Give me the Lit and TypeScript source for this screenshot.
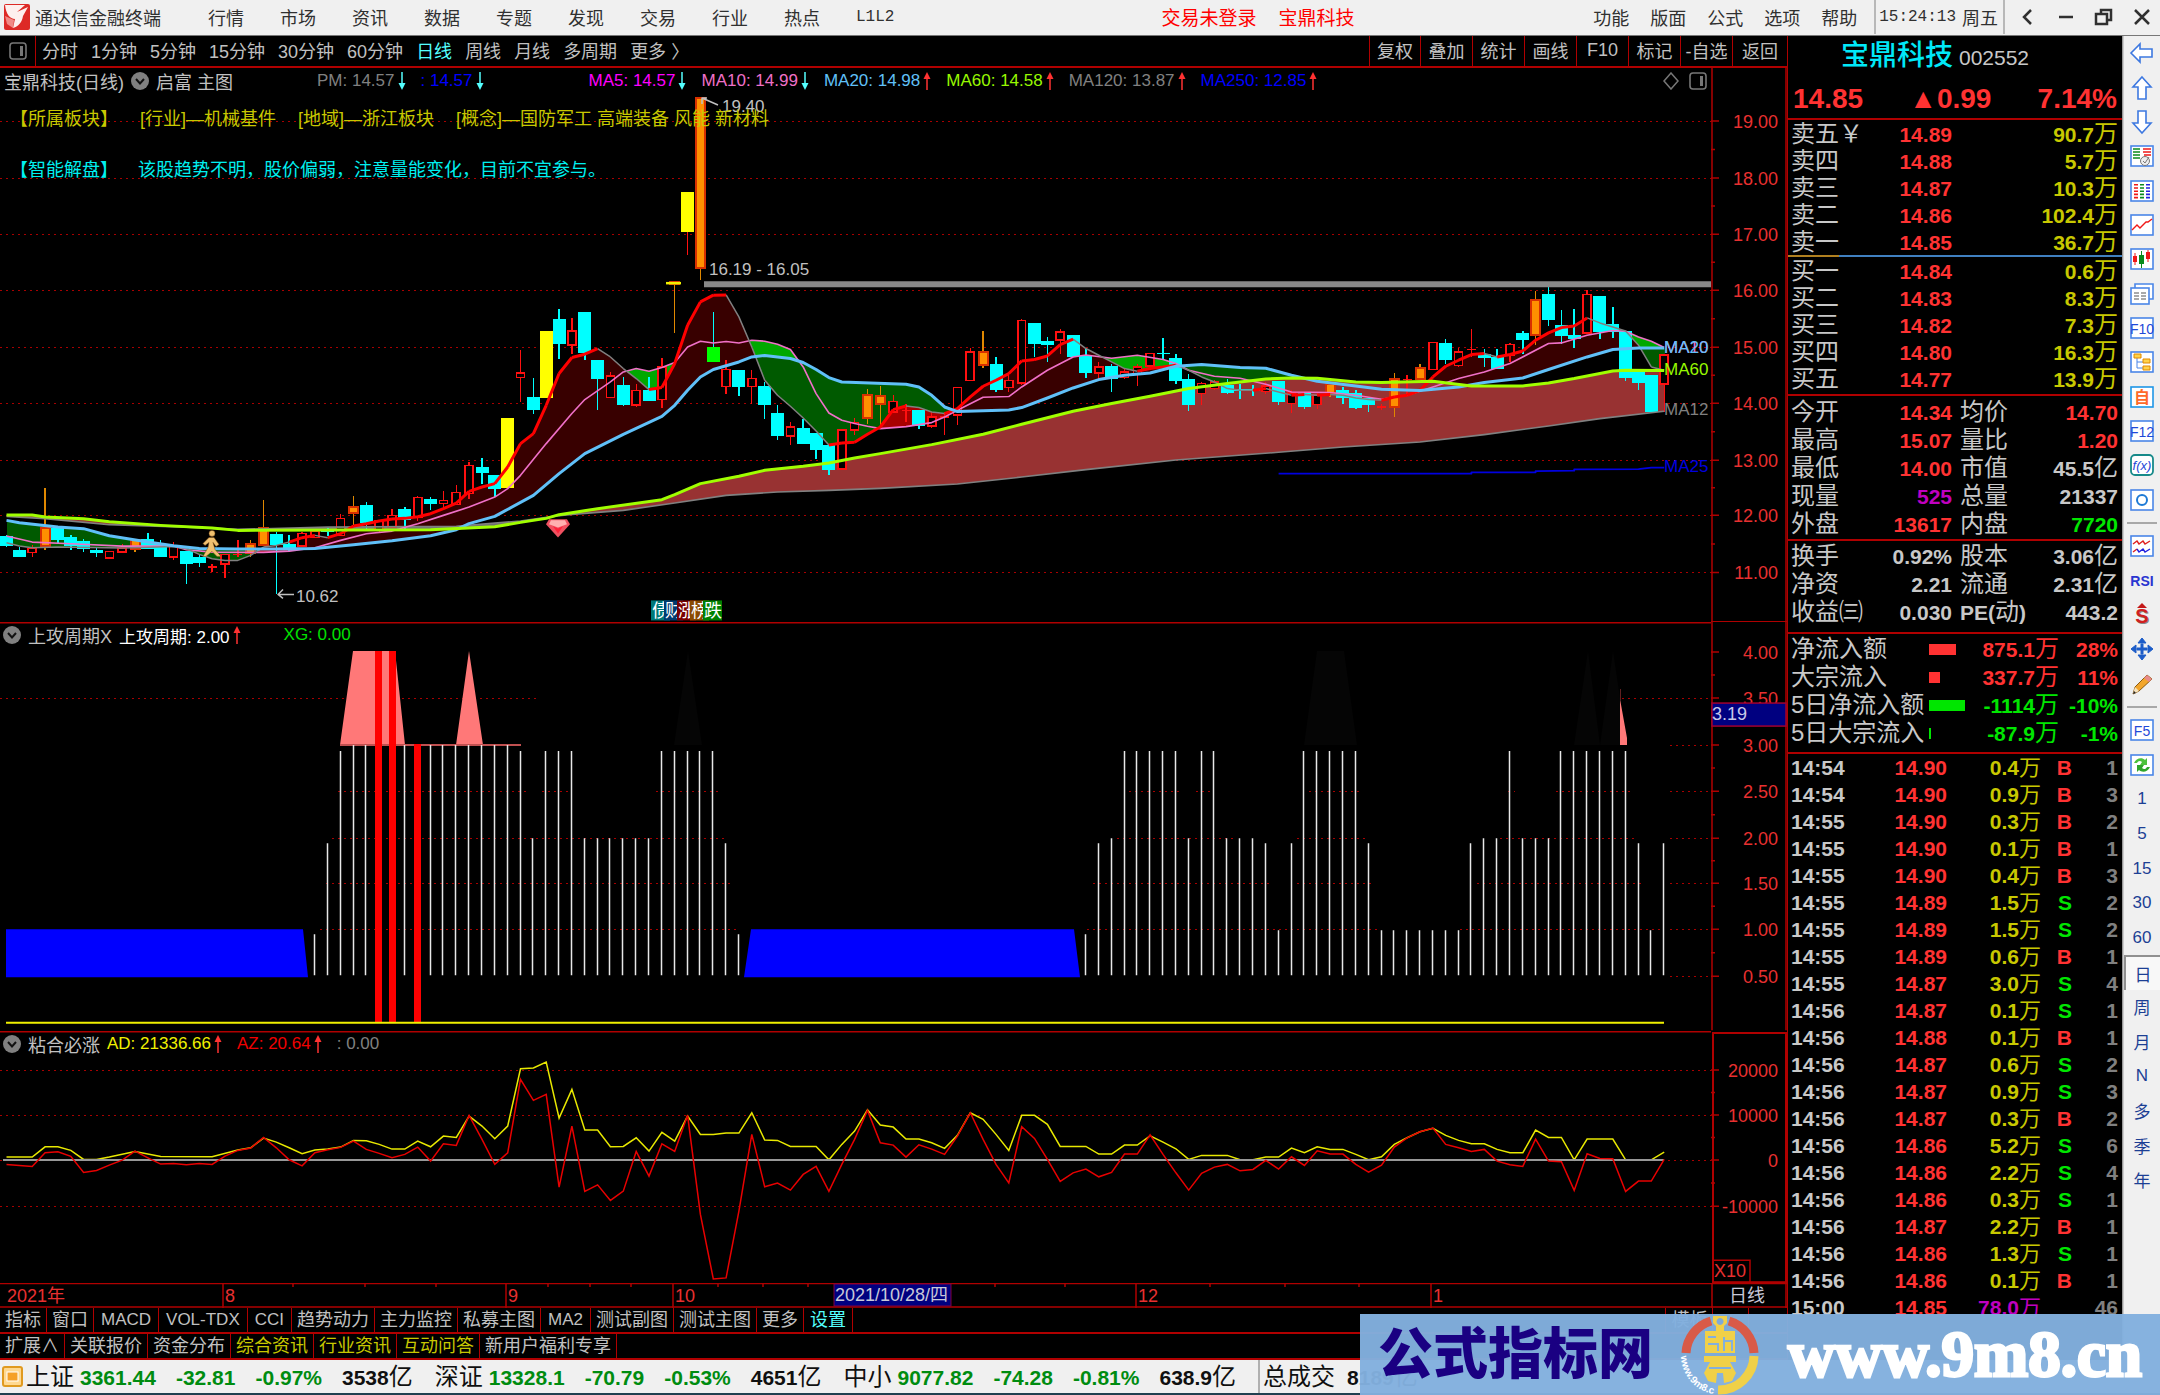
import { LitElement, html, css, svg } from "lit";
import { customElement, property, state } from "lit/decorators.js";
import { classMap } from "lit/directives/class-map.js";

/* ---------- data ---------- */

type Candle = [string, number, number, number, number];

// kind, body top, body bottom, wick top, wick bottom (thirds of a unit below y = 280)
// c falling, r hollow rising, o orange, y yellow, g green, f filled red
const CANDLES: Candle[] = [
  ["c", 767, 797, 765, 800], ["c", 808, 829, 800, 829], ["r", 804, 817, 795, 830], ["o", 744, 797, 624, 810],
  ["c", 744, 779, 744, 788], ["c", 769, 797, 763, 808], ["c", 781, 806, 775, 816], ["c", 808, 819, 800, 829],
  ["r", 814, 832, 814, 832], ["r", 803, 815, 790, 815], ["o", 780, 806, 780, 816], ["c", 777, 805, 757, 805],
  ["c", 790, 829, 779, 829], ["r", 798, 829, 785, 838], ["c", 813, 851, 813, 910], ["c", 831, 847, 820, 861],
  ["f", 857, 861, 850, 876], ["r", 822, 850, 822, 892], ["f", 820, 824, 780, 830], ["o", 790, 817, 780, 830],
  ["o", 742, 795, 660, 797], ["c", 760, 795, 755, 940], ["c", 790, 802, 765, 816], ["r", 760, 797, 755, 797],
  ["r", 752, 772, 752, 772], ["c", 750, 756, 740, 766], ["r", 715, 765, 700, 765], ["o", 679, 699, 646, 735],
  ["c", 673, 728, 664, 748], ["r", 722, 750, 722, 755], ["r", 706, 742, 686, 742], ["c", 686, 718, 680, 745],
  ["r", 652, 710, 648, 722], ["c", 655, 671, 650, 690], ["r", 661, 670, 632, 682], ["r", 637, 672, 614, 672],
  ["r", 556, 640, 546, 655], ["c", 560, 577, 534, 610], ["c", 583, 627, 583, 650], ["y", 412, 622, 412, 622],
  ["r", 278, 292, 209, 366], ["c", 349, 388, 294, 402], ["y", 151, 352, 151, 352], ["c", 115, 190, 87, 236],
  ["r", 152, 194, 114, 220], ["c", 97, 217, 97, 240], ["c", 240, 297, 240, 389], ["r", 287, 352, 275, 352],
  ["c", 313, 375, 290, 376], ["r", 331, 374, 310, 380], ["c", 330, 361, 290, 361], ["r", 260, 358, 233, 383],
  ["o", 6, 10, 8, 159], ["y", -263, -143, -263, -75], ["o", -547, -36, -547, 0], ["g", 200, 244, 97, 244],
  ["r", 268, 319, 240, 342], ["c", 268, 321, 268, 348], ["r", 295, 319, 268, 370], ["c", 317, 374, 305, 415],
  ["c", 398, 468, 373, 478], ["r", 440, 467, 425, 495], ["c", 444, 491, 415, 491], ["c", 457, 509, 457, 537],
  ["c", 494, 568, 494, 584], ["r", 450, 566, 450, 566], ["r", 427, 449, 413, 463], ["o", 344, 414, 327, 430],
  ["o", 348, 370, 316, 435], ["r", 364, 395, 345, 395], ["f", 388, 392, 370, 425], ["c", 388, 437, 388, 447],
  ["r", 411, 437, 395, 442], ["f", 408, 412, 395, 465], ["r", 322, 404, 322, 434], ["r", 215, 301, 202, 301],
  ["o", 214, 254, 153, 262], ["c", 250, 329, 231, 334], ["r", 301, 322, 280, 335], ["r", 121, 308, 115, 315],
  ["c", 127, 190, 127, 230], ["c", 182, 195, 170, 245], ["r", 156, 180, 146, 220], ["c", 164, 230, 164, 230],
  ["c", 226, 279, 205, 292], ["r", 260, 279, 245, 295], ["c", 258, 297, 250, 335], ["r", 275, 292, 265, 297],
  ["r", 260, 280, 250, 317], ["r", 220, 258, 220, 258], ["c", 218, 222, 172, 235], ["c", 232, 302, 220, 310],
  ["c", 295, 375, 282, 393], ["r", 310, 340, 305, 375], ["r", 305, 325, 300, 330], ["c", 315, 338, 295, 342],
  ["c", 325, 332, 310, 357], ["c", 325, 333, 315, 348], ["r", 317, 334, 305, 340], ["c", 303, 366, 303, 374],
  ["r", 338, 370, 330, 398], ["c", 338, 380, 335, 387], ["r", 345, 373, 335, 385], ["o", 312, 337, 310, 350],
  ["c", 330, 352, 320, 372], ["c", 337, 383, 328, 386], ["c", 352, 375, 352, 395], ["f", 376, 384, 370, 390],
  ["o", 295, 380, 278, 410], ["f", 296, 300, 285, 348], ["o", 263, 297, 250, 297], ["r", 187, 268, 187, 268],
  ["c", 187, 239, 175, 250], ["r", 215, 256, 202, 260], ["f", 206, 210, 146, 230], ["c", 220, 233, 205, 260],
  ["c", 231, 267, 205, 267], ["r", 193, 225, 188, 245], ["c", 159, 180, 152, 220], ["o", 61, 163, 34, 195],
  ["c", 42, 119, 18, 136], ["c", 133, 168, 91, 190], ["c", 164, 177, 87, 204], ["r", 43, 158, 30, 158],
  ["c", 47, 156, 47, 177], ["c", 132, 154, 82, 172], ["c", 151, 293, 151, 302], ["c", 275, 307, 275, 330],
  ["c", 285, 395, 285, 395], ["r", 224, 311, 224, 395],
];

type Pt = [number, number];
const pairs = (s: string): Pt[] => s.trim().split(/\s+/).map((p) => p.split(",").map(Number) as Pt);

const MA5 = pairs(`0,787 1,797 2,802 4,800 9,803 13,798 14,805 15,822 16,835 17,840 18,840 19,825 20,800 21,795 22,785
 23,772 24,765 25,772 26,760 27,737 28,730 29,722 30,716 31,714 32,709 33,700 34,685 35,668 36,633 37,620 38,610 39,560
 40,490 41,460 42,375 43,280 44,232 45,222 46,205 47,230 48,265 49,295 50,328 51,322 52,250 53,135 54,65 55,45 56,44
 57,110 58,200 59,300 60,345 61,378 62,413 63,452 64,494 65,488 66,486 67,462 68,440 69,388 70,377 71,382 72,395 73,400
 74,385 75,350 76,318 77,300 78,280 79,242 80,238 81,227 82,193 83,177 84,205 85,225 86,245 87,265 88,273 89,265 90,260
 91,255 92,270 93,290 94,305 95,325 96,330 97,330 98,325 99,335 100,345 101,343 102,345 103,343 104,345 105,353 106,358
 107,360 108,350 109,345 110,330 111,290 112,258 113,240 114,223 115,220 116,230 117,223 118,212 119,180 120,158 121,142
 122,137 123,113 124,128 125,140 126,152 127,195 128,260 129,270`);
const MA10 = pairs(`0,767 2,785 5,790 9,797 13,797 14,808 16,815 20,816 22,812 24,802 26,780 28,760 30,752 32,730 34,705
 36,680 38,650 39,625 40,585 42,490 44,400 45,358 47,305 48,275 49,265 50,273 51,262 52,247 53,200 54,183 55,188 56,184
 57,188 58,180 59,183 60,192 61,208 62,260 63,340 64,398 65,420 66,430 67,438 68,445 70,439 72,427 73,410 74,390 76,351
 78,349 79,320 81,270 83,230 84,224 86,234 88,225 90,238 91,250 92,270 94,288 96,294 98,312 100,335 103,337 105,345
 107,357 109,345 111,320 113,295 115,275 117,250 120,190 121,188 123,165 125,151 126,153 127,170 128,183 129,202`);
const MA20 = pairs(`0,720 1,727 4,740 6,745 8,766 11,785 13,796 15,804 18,806 21,806 24,804 27,793 30,781 33,766 35,748
 36,730 38,708 41,645 43,580 45,520 48,462 51,408 52,375 53,330 54,290 55,268 57,245 58,230 59,226 61,235 62,247 63,268
 64,292 65,305 70,312 71,320 72,345 73,380 74,394 78,389 79,382 81,353 83,323 85,298 87,285 89,278 91,258 93,253 96,262
 98,264 100,285 102,303 105,317 107,327 110,331 113,320 115,307 118,293 120,268 123,230 125,208 127,203 129,203`);
const MA60 = pairs(`0,704 2,704 3,710 6,715 8,724 12,735 16,743 18,750 33,748 38,739 40,726 42,714 43,703 46,685 51,658
 52,643 54,610 57,588 59,570 62,558 64,548 66,533 68,520 72,493 76,462 79,432 83,393 86,370 89,348 92,325 95,310 98,296
 100,293 102,294 105,305 107,307 111,303 114,317 118,317 120,308 122,295 125,272 126,270 129,271`);
const MA120 = pairs(`0,708 3,715 8,733 14,740 18,747 25,740 35,738 38,728 40,722 43,706 44,702 48,690 52,668 56,645 60,635
 64,630 68,624 74,611 79,590 84,568 91,539 99,516 104,500 110,485 115,463 120,437 124,415 129,393`);
const MA250 = pairs("99,580 114,580 114,576 119,576 119,572 122,571 122,567 127,566 128,562 129,562");

const AD = pairs(`0,438 2,438 3,407 4,407 5,418 6,445 7,445 8,438 10,421 12,436 16,437 18,417 19,410 20,381 21,393 22,410
 23,428 24,417 25,414 26,408 27,388 28,389 29,400 30,414 31,414 32,390 33,407 34,375 35,379 36,315 37,345 38,383 39,345
 40,173 41,171 42,153 43,321 44,235 45,357 46,357 47,407 48,406 49,380 50,420 51,364 52,390 53,315 54,370 55,370 56,366
 57,366 58,305 59,387 60,388 61,406 63,406 64,446 65,400 66,360 67,296 68,342 69,348 70,384 71,384 72,395 73,412 74,373
 75,305 76,325 77,370 78,418 79,313 80,313 81,340 82,406 84,406 85,429 86,429 87,402 88,402 89,374 90,393 91,413 92,445
 93,433 95,433 96,446 97,446 98,438 99,438 100,411 101,425 102,407 103,415 104,415 105,430 106,446 107,437 108,400
 109,380 110,362 111,352 112,373 113,388 114,398 115,398 116,415 117,425 118,425 119,357 120,379 121,379 122,446 123,384
 125,384 126,446 128,446 129,423`);
const AZ = pairs(`0,460 2,466 3,425 4,422 5,436 6,484 7,478 8,462 9,447 10,420 11,440 12,459 13,457 14,461 15,457 16,460
 17,435 18,418 19,411 20,379 21,410 22,446 23,464 24,425 25,416 26,409 27,390 28,415 29,427 30,440 31,430 32,408 33,450
 34,398 35,403 36,313 37,385 38,460 39,425 40,205 41,268 42,250 43,528 44,345 45,541 46,521 47,568 48,540 49,421 50,495
 51,398 52,421 53,313 54,610 55,803 56,800 57,600 58,370 59,527 60,516 61,537 62,490 63,466 64,541 65,460 66,385 67,298
 68,395 69,402 70,438 71,401 72,414 73,430 74,375 75,305 76,385 77,460 78,515 79,347 80,382 81,445 82,511 83,485 84,474
 85,497 86,484 87,429 88,429 89,371 90,430 91,485 92,537 93,487 94,468 95,460 96,479 97,475 98,448 99,474 100,437
 101,463 102,419 103,429 104,429 105,460 106,483 107,462 108,408 109,380 110,362 111,351 112,400 113,410 114,421 115,415
 116,450 117,461 118,466 119,384 120,450 121,452 122,538 123,428 124,442 125,443 126,541 127,510 128,510 129,445`);

// Bar level per day from day 24 on: a 0.9, b 1.0, c 1.9, d 2.0, e 2.9, f 3.0, "." none
const CYCLE =
  "aceffff" + "f" + "ffffffff" + "e" + "d" + "eee" + "dddddd" + "eeeee" + "ca" + ".".repeat(26) +
  "acdeeeeedeedddcbceeeeecbbbbbbbcddedddeeeeeecbc";
const CYCLE_TOP: Record<string, number> = { a: 934, b: 930, c: 843, d: 838, e: 751, f: 745 };

/* ---------- scales ---------- */

const X = (i: number) => Math.round((6.5 + 12.85 * i) * 10) / 10;
const Y = (v: number) => Math.round((280 + v / 3) * 10) / 10;
const Y3 = (v: number) => Math.round((1010 + v / 3) * 10) / 10;
const line = (pts: Pt[], y = Y) => pts.map(([i, v], n) => `${n ? "L" : "M"}${X(i)} ${y(v)}`).join("");

function at(pts: Pt[], i: number): number {
  for (let n = 1; n < pts.length; n++) {
    if (pts[n][0] >= i) {
      const [a, va] = pts[n - 1];
      const [b, vb] = pts[n];
      return b === a ? vb : va + ((vb - va) * (i - a)) / (b - a);
    }
  }
  return pts[pts.length - 1][1];
}

/** Shades the space between the averages, one column per pixel. */
function bands() {
  const out: Record<string, string> = { maroon: "", green: "", forest: "", red: "", brown: "", ash: "" };
  for (let x = 7; x <= 1664; x++) {
    const i = (x - 6.5) / 12.85;
    const a = at(MA5, i);
    const b = at(MA10, i);
    const c = at(MA20, i);
    const s = [a, b, c].sort((p, q) => p - q);
    for (let k = 0; k < 2; k++) {
      const m = (s[k] + s[k + 1]) / 2;
      const inner = m > Math.min(a, b) && m < Math.max(a, b);
      const key = m < c ? (inner && a > b ? "green" : "maroon") : inner && a < b ? "red" : "forest";
      out[key] += `M${x + 0.5} ${Y(s[k])}V${Y(s[k + 1])}`;
    }
    const d = at(MA60, i);
    const e = at(MA120, i);
    out[d < e ? "brown" : "ash"] += `M${x + 0.5} ${Y(d)}V${Y(e)}`;
  }
  return out;
}
const BANDS = bands();

function slopes(pts: Pt[]) {
  let up = "";
  let down = "";
  for (let n = 1; n < pts.length; n++) {
    const seg = `M${X(pts[n - 1][0])} ${Y(pts[n - 1][1])}L${X(pts[n][0])} ${Y(pts[n][1])}`;
    if (pts[n][1] < pts[n - 1][1] && n > 14) up += seg;
    else down += seg;
  }
  return { up, down };
}
const SLOPES = slopes(MA5);

const PRICE_Y = [121, 178, 234, 290, 347, 403, 460, 515, 572];
const CYCLE_Y = [652, 698, 745, 791, 838, 883, 929, 976];
const FLOW_Y = [1069, 1114, 1159, 1205];

/* ---------- icons ---------- */

const box = (inner: unknown, color = "#4a86e8") => svg`<rect x="1" y="1" width="22" height="20" fill="#fff" stroke=${color} stroke-width="1.6"></rect>${inner}`;
const boxText = (t: string) => box(svg`<text x="12" y="17" text-anchor="middle" font-size="14" fill="#1f49d8">${t}</text>`);
const SIDE: Record<string, unknown> = {
  左移: svg`<path d="M1 11L10 2V7H22V15H10V20Z" fill="#fff" stroke="#3d78e0" stroke-width="1.6"></path>`,
  上移: svg`<path d="M12 0L21 10H16V22H8V10H3Z" fill="#fff" stroke="#3d78e0" stroke-width="1.6"></path>`,
  下移: svg`<path d="M12 22L21 12H16V0H8V12H3Z" fill="#fff" stroke="#3d78e0" stroke-width="1.6"></path>`,
  报价: box(svg`<path d="M3 4H10M3 7H10M3 10H10M3 13H10" stroke="#0a8a1c" stroke-width="1.6"></path><path d="M13 4H21M13 7H21M14 10H21" stroke="#f01818" stroke-width="1.6"></path><circle cx="15" cy="16" r="4.5" fill="#eee" stroke="#777"></circle><path d="M13 16L15 18L19 12" fill="none" stroke="#777"></path>`),
  列表: box(svg`<g stroke-width="4" stroke-dasharray="1.6 1.6" fill="none"><path d="M6 4V19" stroke="#f01818"></path><path d="M12 4V19" stroke="#0a8a1c"></path><path d="M18 4V19" stroke="#2222e0"></path></g>`),
  走势: box(svg`<path d="M2 16L7 11L10 14L16 8L18 8L22 5" fill="none" stroke="#f01818" stroke-width="1.4"></path>`),
  K线: box(svg`<path d="M5 5V17M18 2V14" stroke="#f01818"></path><path d="M3 8H7V14H3ZM16 4H20V11H16Z" fill="#f01818"></path><path d="M11.500 3V20" stroke="#0a8a1c"></path><path d="M9 7H14V16H9Z" fill="#0a8a1c"></path>`),
  窗口: svg`<path d="M5 6V1H23V16H19" fill="#fff" stroke="#4a86e8" stroke-width="1.6"></path><rect x="1" y="5" width="18" height="16" fill="#fff" stroke="#4a86e8" stroke-width="1.6"></rect><path d="M4 10H9M11 10H16M4 13H9M11 13H16M4 16H9M11 16H16" stroke="#555"></path>`,
  F10: boxText("F10"),
  结构: box(svg`<path d="M7 6V17H13M7 11H13" fill="none" stroke="#4a86e8"></path><path d="M4 3H11V7H4ZM13 8H20V12H13ZM13 15H20V19H13Z" fill="#ffd24a" stroke="#e08a00"></path>`),
  自选: box(svg`<text x="12" y="17" text-anchor="middle" font-size="16" font-weight="700" fill="#ff6a2a">自</text>`, "#1e96e6"),
  F12: boxText("F12"),
  公式: svg`<rect x="1" y="1" width="22" height="20" rx="4" fill="#fff" stroke="#178a8a" stroke-width="1.8"></rect><text x="12" y="16" text-anchor="middle" font-size="13" font-style="italic" fill="#1f49d8">f(x)</text>`,
  圆: box(svg`<circle cx="12" cy="11" r="5" fill="none" stroke="#1e7ad6" stroke-width="2"></circle>`),
  波形: box(svg`<path d="M3 9L7 6L9 9L13 6L15 9L20 6M3 17L7 14" fill="none" stroke="#e02020" stroke-width="1.4"></path><path d="M7 14L9 17L13 14L15 17L20 14" fill="none" stroke="#2222e0" stroke-width="1.4"></path>`),
  RSI: svg`<text x="12" y="16" text-anchor="middle" font-size="14" font-weight="700" fill="#2a35d0">RSI</text>`,
  资金: svg`<path d="M12 -1L17 4H7Z" fill="#c41818"></path><text x="13" y="20" text-anchor="middle" font-size="20" font-weight="700" fill="#888">S</text><text x="12" y="19" text-anchor="middle" font-size="20" font-weight="700" fill="#d02020">S</text>`,
  移动: svg`<path d="M12 0L16 5H8ZM12 22L16 17H8ZM1 11L6 7V15ZM23 11L18 7V15ZM7 10H17V12H7ZM11 6H13V16H11Z" fill="#1c5cc8" stroke="#1c5cc8"></path>`,
  画笔: svg`<path d="M3 21L5 14L17 2L22 6L9 18Z" fill="#f2a62c" stroke="#8a5a12"></path><path d="M17 2L22 6L19 9L14 5Z" fill="#e88a8a"></path><path d="M3 21L5 14L9 18Z" fill="#f6e2bc"></path><path d="M3 21L4 18L6 20Z" fill="#222"></path>`,
  F5: boxText("F5"),
  刷新: box(svg`<path d="M4 9C6 4 12 3 15 6L17 4V11H10L12 8C10 6 8 7 7 9Z" fill="#4cc23c"></path><path d="M20 13C18 18 12 19 9 16L7 18V11H14L12 14C14 16 16 15 17 13Z" fill="#2ea52a"></path>`),
};

const arrow = (dir: "up" | "down") => html`<svg class="arrow" viewBox="0 0 8 18" aria-hidden="true">
  ${dir === "up"
    ? svg`<path d="M4 18V4" stroke="#ff3232" stroke-width="1.5"></path><path d="M4 0L7.500 7H0.500Z" fill="#ff3232"></path>`
    : svg`<path d="M4 0V14" stroke="#54ffff" stroke-width="1.5"></path><path d="M4 18L7.500 11H0.500Z" fill="#54ffff"></path>`}
</svg>`;

const chevron = html`<svg class="chev" viewBox="0 0 18 18" aria-hidden="true"><circle cx="9" cy="9" r="9" fill="#808080"></circle><path d="M5 7L9 11.500L13 7" fill="none" stroke="#111" stroke-width="2"></path></svg>`;
const paneIcon = html`<svg class="pane-icon" viewBox="0 0 18 18" aria-hidden="true"><rect x="1" y="1" width="16" height="16" rx="3" fill="none" stroke="#777" stroke-width="1.6"></rect><path d="M11 4H14V14H11Z" fill="#777"></path></svg>`;

const BASE = css`
  :host { display: block; box-sizing: border-box; }
  *, *::before, *::after { box-sizing: border-box; }
  button { font: inherit; color: inherit; background: none; border: 0; padding: 0; margin: 0; cursor: pointer; white-space: nowrap; }
  svg { display: block; }
`;

/* ---------- menu bar ---------- */

@customElement("menu-bar")
class MenuBar extends LitElement {
  static styles = [BASE, css`
    :host { background: #f0f0f0; color: #303030; border-bottom: 1px solid #777; font-size: 18px; }
    .bar { display: flex; align-items: center; height: 35px; padding: 0 8px 2px 4px; }
    .logo { width: 26px; height: 26px; flex: none; margin-right: 5px; }
    .name { white-space: nowrap; }
    nav { display: flex; gap: 36px; margin-left: 47px; }
    .mono { font-family: "Liberation Mono", monospace; font-size: 16px; }
    .alerts { display: flex; gap: 22px; margin: 0 auto 0 267px; color: #ff0000; font-size: 19px; white-space: nowrap; }
    .right { gap: 21px; margin: 0 17px 0 0; }
    .clock { display: flex; align-items: center; gap: 6px; height: 35px; padding: 0 5px 0 3px; border: 2px solid #b8b8b8; border-width: 0 2px; white-space: nowrap; }
    .win { display: flex; gap: 18px; margin-left: 13px; }
    .win svg { width: 20px; height: 20px; }
  `];
  render() {
    const wins: [string, unknown][] = [
      ["后退", svg`<path d="M13 3L6 10L13 17" stroke-width="2.500"></path>`],
      ["最小化", svg`<path d="M3 10H17" stroke-width="2.500"></path>`],
      ["还原", svg`<path d="M7 6V3H17V13H14" stroke-width="2.500"></path><path d="M2 7H13V17H2Z" stroke-width="2.500"></path>`],
      ["关闭", svg`<path d="M3 3L17 17M17 3L3 17" stroke-width="2.500"></path>`],
    ];
    return html`<header class="bar">
      <svg class="logo" viewBox="0 0 26 26" aria-hidden="true"><rect width="26" height="26" rx="2" fill="#dd2a26"></rect><path d="M1 1H21L13 8L24 3L19 12C18 18 15 22 9 24L11 15C6 15 2 10 1 1Z" fill="#fdf0ee"></path><path d="M1 12L10 16L9 24L3 20Z" fill="#f08a86"></path></svg>
      <span class="name">通达信金融终端</span>
      <nav>${"行情 市场 资讯 数据 专题 发现 交易 行业 热点".split(" ").map((t) => html`<button>${t}</button>`)}<button class="mono">L1L2</button></nav>
      <div class="alerts"><button>交易未登录</button><button>宝鼎科技</button></div>
      <nav class="right">${"功能 版面 公式 选项 帮助".split(" ").map((t) => html`<button>${t}</button>`)}</nav>
      <div class="clock"><time class="mono">15:24:13</time><span>周五</span></div>
      <div class="win">${wins.map(([n, p]) => html`<button aria-label=${n}><svg viewBox="0 0 20 20" fill="none" stroke="#303030">${p}</svg></button>`)}</div>
    </header>`;
  }
}

/* ---------- period toolbar ---------- */

@customElement("period-bar")
class PeriodBar extends LitElement {
  @state() private current = "日线";
  static styles = [BASE, css`
    .bar { display: flex; height: 32px; border-bottom: 2px solid #b00000; color: #c0c0c0; font-size: 18px; }
    .toggle { width: 36px; flex: none; border-right: 1px solid #b00000; display: grid; place-items: center; }
    .pane-icon { width: 18px; height: 18px; }
    .periods { display: flex; gap: 13px; padding-left: 6px; flex: 1; }
    .periods button, .actions button { padding-bottom: 2px; }
    .on { color: #54ffff; }
    .actions { display: grid; grid-template-columns: 51px repeat(6, 52px) 55px; }
    .actions button { border-left: 1px solid #b00000; }
  `];
  render() {
    return html`<div class="bar">
      <button class="toggle" aria-label="侧栏">${paneIcon}</button>
      <div class="periods">${"分时 1分钟 5分钟 15分钟 30分钟 60分钟 日线 周线 月线 多周期".split(" ").map(
        (t) => html`<button class=${classMap({ on: t === this.current })} @click=${() => (this.current = t)}>${t}</button>`
      )}<button>更多 〉</button></div>
      <div class="actions">${"复权 叠加 统计 画线 F10 标记 -自选 返回".split(" ").map((t) => html`<button>${t}</button>`)}</div>
    </div>`;
  }
}

/* ---------- charts ---------- */

@customElement("chart-stack")
class ChartStack extends LitElement {
  static styles = [BASE, css`
    :host { display: flex; flex-direction: column; min-height: 0; color: #c0c0c0; font-size: 17px; }
    section { position: relative; display: grid; grid-template-columns: minmax(0, 1fr) 76px; grid-template-rows: minmax(0, 1fr); min-height: 0; }
    .price { flex: 554 1 0; }
    .cycle { flex: 408 1 0; }
    .flow { flex: 252 1 0; }
    section > svg { width: 100%; height: 100%; overflow: hidden; }
    .dates { height: 25px; flex: none; }
    .legend { position: absolute; left: 4px; top: 2px; display: flex; align-items: center; gap: 7px; height: 22px; white-space: nowrap; }
    .sub { left: 3px; }
    .title { font-size: 18px; }
    .legend .values { display: flex; gap: 15px; }
    .item { display: flex; align-items: center; gap: 3px; }
    .arrow { width: 8px; height: 18px; }
    .chev { width: 18px; height: 18px; }
    .pm { margin-left: 77px; }
    .mas { margin-left: 98px; }
    .xg { margin-left: 36px; }
    .tools { left: auto; right: 80px; gap: 9px; }
    .tools svg { width: 18px; height: 18px; }
    .notes { position: absolute; left: 10px; top: 38px; display: grid; gap: 24px; font-size: 18px; white-space: nowrap; }
    .notes p { margin: 0; display: flex; gap: 22px; line-height: 27px; color: #c8c800; }
    .notes p.tip { color: #00f0f0; gap: 20px; }
    .white { color: #fff; }
    .gray { color: #808080; }
    .blue { color: #0000ff; }
    .magenta { color: #ff00ff; }
    .pink { color: #f070c8; }
    .sky { color: #60c0f8; }
    .lime { color: #98f800; }
    .green { color: #00e000; }
    .yellow { color: #f0f000; }
    .red { color: #f00000; }
    text { font-size: 17px; fill: #c0c0c0; }
    .axis text { font-size: 18px; fill: #e83030; text-anchor: end; }
    .axis .start { text-anchor: start; }
    .axis .mark { fill: #c8c8e8; text-anchor: start; }
    .dates text { font-size: 18px; fill: #e83030; }
    .dates .light { fill: #c8c8d8; }
    .dates .mid { text-anchor: middle; }
    .rule { stroke: #b00000; stroke-width: 2; fill: none; }
    .thin { stroke: #b00000; stroke-width: 1.5; fill: none; }
    .dots { stroke: #a80000; stroke-width: 1; stroke-dasharray: 2 4; fill: none; shape-rendering: crispEdges; }
    .crisp { shape-rendering: crispEdges; }
    .tag text { font-size: 18px; fill: #fff; }
    .t-pink { fill: #f070c8; } .t-sky { fill: #60c0f8; } .t-lime { fill: #98f800; } .t-gray { fill: #808080; } .t-blue { fill: #0000e0; }
  `];

  private item(text: string, cls: string, dir?: "up" | "down") {
    return html`<span class="item ${cls}">${text}${dir ? arrow(dir) : ""}</span>`;
  }

  private candle([k, t, b, wt, wb]: Candle, i: number) {
    const x = X(i);
    const color: Record<string, string> = { c: "#00ffff", r: "#ff1010", o: "#ff9000", y: "#ffff00", g: "#00ff00", f: "#ff1010" };
    const wick = k === "g" ? "#00ffff" : k === "y" ? "#ff1010" : k === "o" ? "#e08800" : color[k];
    const h = Math.max(Y(b) - Y(t), 1.5);
    if (k === "r")
      return svg`<path d="M${x} ${Y(wt)}V${Y(t)}M${x} ${Y(b)}V${Y(wb)}" stroke=${wick} stroke-width="1.3"></path>
        <rect x=${x - 4} y=${Y(t)} width="8" height=${h} fill="#000" stroke=${color.r} stroke-width="1.6"></rect>`;
    const w = k === "o" || k === "f" ? 9 : 13;
    return svg`<path d="M${x} ${Y(wt)}V${Y(wb)}" stroke=${wick} stroke-width="1.5"></path>
      <rect x=${x - w / 2} y=${Y(t)} width=${w} height=${h} fill=${color[k]} stroke=${k === "o" ? "#d83000" : "none"} stroke-width="2"></rect>`;
  }

  private price() {
    const tags: [string, string][] = [["债", "#007878"], ["财", "#003a70"], ["涨", "#780000"], ["榜", "#8a4a00"], ["跌", "#008000"]];
    return svg`
      <path class="dots" d=${PRICE_Y.map((y) => `M0 ${y}H1711`).join("")}></path>
      <g class="crisp" fill="none" stroke-width="1.2">
        <path d=${BANDS.maroon} stroke="#380000"></path><path d=${BANDS.forest} stroke="#005a00"></path>
        <path d=${BANDS.green} stroke="#00a800"></path><path d=${BANDS.red} stroke="#a80000"></path>
        <path d=${BANDS.brown} stroke="#983232"></path><path d=${BANDS.ash} stroke="#707070"></path>
      </g>
      <g class="crisp">${CANDLES.map((c, i) => this.candle(c, i))}</g>
      <path d="M704 284H1711" stroke="#888" stroke-width="6"></path>
      <g fill="none" stroke-linejoin="round">
        <path d=${line(MA120)} stroke="#808080" stroke-width="1.6"></path>
        <path d=${line(MA250)} stroke="#0000e0" stroke-width="1.8"></path>
        <path d=${line(MA10)} stroke="#f070c8" stroke-width="1.6"></path>
        <path d=${SLOPES.down} stroke="#808080" stroke-width="1.5"></path>
        <path d=${SLOPES.up} stroke="#ff0000" stroke-width="3"></path>
        <path d=${line(MA20)} stroke="#60c0f8" stroke-width="3"></path>
        <path d=${line(MA60)} stroke="#a0ff00" stroke-width="3"></path>
        <path d="M666 283H681" stroke="#f0f000" stroke-width="2.500"></path>
        <path d="M718 105L702 98M702 104V98H707M294 594H278M283 589L278 594L283 598" stroke="#c0c0c0" stroke-width="1.5"></path>
      </g>
      <text x="722" y="112">19.40</text><text x="709" y="275">16.19 - 16.05</text><text x="296" y="602">10.62</text>
      <text class="t-pink" x="1664" y="353">MA10</text><text class="t-sky" x="1664" y="353">MA20</text><text class="t-lime" x="1664" y="375">MA60</text>
      <text class="t-gray" x="1664" y="415">MA12</text><text class="t-blue" x="1664" y="472">MA25</text>
      <g fill="#f0c070" stroke="#7a4a10" stroke-width="0.500"><circle cx="212" cy="533" r="3"></circle><path d="M209 537H214L219 544L216 546L213 542L215 549L221 556H217L212 551L206 556H203L208 547L209 542L205 545L203 543Z"></path></g>
      <path d="M549 519H567L570 524L558 537L546 524Z" fill="#f05060"></path><path d="M551 520H565L567 524L558 527L549 524Z" fill="#ffb0b0"></path><path d="M553 526L558 528L563 526L558 533Z" fill="#ff2038"></path>
      <g class="tag">${tags.map(([t, c], n) => svg`<rect x=${651 + n * 13} y="600" width="19" height="20" fill=${c}></rect><text x=${652 + n * 13} y="617">${t}</text>`)}</g>`;
  }

  private cycle() {
    const segs: [number, string][] = [
      [698, "0-540 1622-1711"], [745, "1670-1711"], [976, "1670-1711"],
      [791, "338-526 542-570 656-718 1129-1180 1196-1211 1309-1360 1508-1515 1556-1630 1670-1711"],
      [838, "332-725 1117-1235 1297-1367 1500-1638 1670-1711"],
      [883, "326-730 1093-1270 1297-1372 1477-1643 1670-1711"],
      [929, "320-737 1087-1377 1460-1664 1670-1711"],
    ];
    const dots = segs.map(([y, s]) => s.split(" ").map((r) => r.split("-")).map(([a, b]) => `M${a} ${y}H${b}`).join("")).join("");
    const bars = [...CYCLE].map((k, n) => (k === "." ? "" : `M${Math.round(X(24 + n)) - 0.5} ${CYCLE_TOP[k]}V975`)).join("");
    return svg`
      <path class="dots" d=${dots}></path>
      <g fill="#050505"><path d="M674 745L688 651L702 745ZM1304 745L1317 651H1344L1357 745ZM1574 745L1588 651L1600 745L1613 651L1627 745Z"></path></g>
      <path d="M340 745L353 651H395L405 745ZM456 745L469 651L483 745ZM1620 745V699L1627 738V745Z" fill="#ff7878"></path>
      <path d="M340 745H521" stroke="#c05050" stroke-width="2"></path>
      <path d="M1620.500 689V700" stroke="#602020"></path>
      <path d=${bars} stroke="#e8e8e8" stroke-width="1.5"></path>
      <path d="M375 651H382V1022H375ZM389 651H396V1022H389ZM414 744H421V1022H414Z" fill="#ff0000"></path>
      <path d="M6 929H303L308 977H6ZM751 929H1074L1080 977H744Z" fill="#0000ff"></path>
      <path d="M6 1022.500H1664" stroke="#f0f000" stroke-width="2"></path>`;
  }

  private flow() {
    return svg`
      <path class="dots" d="M0 1069H1711M0 1114H1711M0 1159H1711M0 1205H1711"></path>
      <g fill="none" stroke-width="1.5"><path d=${line(AD, Y3)} stroke="#e8e800"></path><path d="M3 1159H1664" stroke="#989898" stroke-width="2"></path><path d=${line(AZ, Y3)} stroke="#e80000"></path></g>`;
  }

  private axis(ys: number[], labels: string[]) {
    const marks = ys.map((y, n) => `M0 ${y}H8${n < ys.length - 1 ? `M0 ${(y + ys[n + 1]) / 2}H4` : ""}`).join("");
    return svg`<path class="thin" d=${marks}></path>${labels.map((t, n) => svg`<text x="67" y=${ys[n] + 7}>${t}</text>`)}`;
  }

  render() {
    const months: [number, string][] = [[223, "8"], [506, "9"], [673, "10"], [1136, "12"], [1431, "1"]];
    const ticks = [293, 365, 436, 548, 590, 631, 718, 763, 808, 995, 1065, 1210, 1285, 1359];
    return html`
      <section class="price">
        <svg viewBox="0 68 1711 554" preserveAspectRatio="none" role="img" aria-label="宝鼎科技日线">${this.price()}</svg>
        <svg class="axis" viewBox="0 68 76 554" preserveAspectRatio="none">
          <path class="thin" d="M1 68V622M75 68V622"></path>${this.axis(PRICE_Y, ["19.00", "18.00", "17.00", "16.00", "15.00", "14.00", "13.00", "12.00", "11.00"])}
          <path class="rule" d="M0 621.500H76"></path>
        </svg>
        <div class="legend"><span class="title">宝鼎科技(日线)</span>${chevron}<span class="title">启富 主图</span>
          <div class="values pm">${this.item("PM: 14.57", "gray", "down")}${this.item(": 14.57", "blue", "down")}</div>
          <div class="values mas">${this.item("MA5: 14.57", "magenta", "down")}${this.item("MA10: 14.99", "pink", "down")}${this.item("MA20: 14.98", "sky", "up")}${this.item("MA60: 14.58", "lime", "up")}${this.item("MA120: 13.87", "gray", "up")}${this.item("MA250: 12.85", "blue", "up")}</div>
        </div>
        <div class="legend tools"><svg viewBox="0 0 18 18" aria-hidden="true"><path d="M9 1L16 9L9 17L2 9Z" fill="none" stroke="#777" stroke-width="1.5"></path></svg>${paneIcon}</div>
        <div class="notes">
          <p><span>【所属板块】</span><span>[行业]—机械基件</span><span>[地域]—浙江板块</span><span>[概念]—国防军工 高端装备 风能 新材料</span></p>
          <p class="tip"><span>【智能解盘】</span><span>该股趋势不明，股价偏弱，注意量能变化，目前不宜参与。</span></p>
        </div>
      </section>
      <section class="cycle">
        <svg viewBox="0 622 1711 408" preserveAspectRatio="none" role="img" aria-label="上攻周期">${this.cycle()}<path class="rule" d="M0 622.500H1711"></path></svg>
        <svg class="axis" viewBox="0 622 76 408" preserveAspectRatio="none">
          <path class="thin" d="M1 622V1030M75 622V1030"></path>${this.axis(CYCLE_Y, ["4.00", "3.50", "3.00", "2.50", "2.00", "1.50", "1.00", "0.50"])}
          <rect x="1" y="703" width="74" height="23" fill="#000080" stroke="#a00030" stroke-width="1.5"></rect><text class="mark" x="1" y="720">3.19</text>
        </svg>
        <div class="legend sub">${chevron}<span class="title">上攻周期X</span>${this.item("上攻周期: 2.00", "white", "up")}${this.item("XG: 0.00", "green xg")}</div>
      </section>
      <section class="flow">
        <svg viewBox="0 1030 1711 252" preserveAspectRatio="none" role="img" aria-label="粘合必涨">${this.flow()}<path class="rule" d="M0 1030.500H1711"></path></svg>
        <svg class="axis" viewBox="0 1030 76 252" preserveAspectRatio="none">
          <rect class="rule" x="2" y="1032" width="73" height="249"></rect>${this.axis(FLOW_Y, ["20000", "10000", "0", "-10000"])}
          <path class="thin" d="M2 1259H39V1281"></path><text class="start" x="3" y="1276">X10</text>
        </svg>
        <div class="legend sub">${chevron}<span class="title">粘合必涨</span><div class="values">${this.item("AD: 21336.66", "yellow", "up")}${this.item("AZ: 20.64", "red", "up")}${this.item(": 0.00", "gray")}</div></div>
      </section>
      <section class="dates">
        <svg viewBox="0 1282 1711 25" preserveAspectRatio="none">
          <path class="thin" d="M0 1282.500H1711M0 1306H1711${months.map(([x]) => `M${x} 1282V1307`).join("")}${ticks.map((x) => `M${x} 1282V1286`).join("")}"></path>
          <rect x="834" y="1283" width="117" height="22" fill="#000080" stroke="#800040"></rect>
          <text x="7" y="1301">2021年</text>${months.map(([x, t]) => svg`<text x=${x + 2} y="1301">${t}</text>`)}
          <text class="light" x="835" y="1300">2021/10/28/四</text>
        </svg>
        <svg viewBox="0 1282 76 25" preserveAspectRatio="none"><path class="thin" d="M0 1282.500H76M0 1306H76M1 1282V1307M75 1282V1307"></path><text class="light mid" x="36" y="1301">日线</text></svg>
      </section>`;
  }
}

/* ---------- tab rows under the charts ---------- */

@customElement("tab-rows")
class TabRows extends LitElement {
  static styles = [BASE, css`
    .row { display: flex; height: 26px; border-bottom: 2px solid #b00000; color: #c0c0c0; font-size: 18px; }
    button { border-right: 1px solid #b00000; padding: 0 5px; line-height: 24px; }
    .latin { font-size: 17px; padding: 0 7px; }
    .cyan { color: #54ffff; padding: 0 6px; }
    .gold { color: #c8c800; }
    .push { margin-left: auto; border-left: 1px solid #b00000; }
    .last { margin-right: 38px; padding: 0 12px; }
  `];
  render() {
    const cls = (t: string) => classMap({ latin: /^[A-Z]/.test(t), cyan: t === "设置", gold: ["综合资讯", "行业资讯", "互动问答"].includes(t) });
    return html`
      <div class="row">${"指标 窗口 MACD VOL-TDX CCI 趋势动力 主力监控 私募主图 MA2 测试副图 测试主图 更多 设置".split(" ").map((t) => html`<button class=${cls(t)}>${t}</button>`)}<button class="push">模板</button><button class="last">+</button></div>
      <div class="row">${"扩展∧ 关联报价 资金分布 综合资讯 行业资讯 互动问答 新用户福利专享".split(" ").map((t) => html`<button class=${cls(t)}>${t}</button>`)}</div>`;
  }
}

/* ---------- quote panel ---------- */

@customElement("quote-panel")
class QuotePanel extends LitElement {
  static styles = [BASE, css`
    :host { overflow: hidden; background: #000; color: #c8c8c8; font-size: 24px; border-right: 1px solid #999; min-height: 0; }
    header { height: 84px; border-bottom: 2px solid #b00000; padding: 0 5px; }
    h1 { margin: 0; display: flex; align-items: baseline; justify-content: center; gap: 6px; font-size: 28px; line-height: 40px; font-weight: 500; color: #00e8f8; padding-right: 40px; }
    h1 small { font-size: 21px; font-weight: 400; color: #c8c8c8; }
    .last { display: flex; justify-content: space-between; font-size: 28px; line-height: 42px; font-weight: 700; color: #ff3232; }
    table { width: 100%; border-collapse: collapse; table-layout: fixed; }
    th, td { padding: 0; font-weight: 400; text-align: right; white-space: nowrap; overflow: visible; line-height: 27px; height: 27px; }
    th { text-align: left; padding-left: 3px; }
    b { font-size: 21px; line-height: 1; }
    td:last-child { padding-right: 4px; }
    .book, .info, .flows { border-bottom: 2px solid #b00000; }
    .split { height: 2px; background: linear-gradient(90deg, #b08020 0 51px, #4080c0 51px); }
    .book { padding-bottom: 2px; }
    .info th, .info td { height: 28px; line-height: 28px; }
    .info { padding: 2px 0 1px; }
    .ratio { padding: 1px 0 6px; }
    .flows { padding: 1px 0 5px; }
    .flows th, .flows td { height: 28px; line-height: 28px; }
    .c-label { width: 80px; } .c-val { width: 84px; } .c-gap { width: 80px; }
    .info th + td + th { padding-left: 8px; }
    .c-name { width: 141px; } .c-bar { width: 42px; } .c-sum { width: 88px; }
    .bar { display: block; height: 11px; }
    .red { color: #ff3232; } .green { color: #00e600; } .gold { color: #c8c800; } .violet { color: #c000c0; } .gray { color: #808080; }
    .bg-red { background: #ff3232; } .bg-green { background: #00e600; }
    .c-time { width: 78px; } .c-price { width: 81px; } .c-vol { width: 94px; } .c-side { width: 34px; }
    .ticks td.side { text-align: right; padding-right: 3px; }
    .ticks { font-size: 22px; }
  `];

  private num(v: string) {
    const m = v.match(/^([-\d.%]+)(\D?)$/);
    return m ? html`<b>${m[1]}</b>${m[2]}` : html`<b>${v}</b>`;
  }

  private book(rows: string) {
    return html`<table><colgroup><col class="c-label"><col class="c-val"><col></colgroup>
      ${rows.split("|").map((r) => { const [n, p, v] = r.split(" "); return html`<tr><th scope="row">${n}</th><td class="red">${this.num(p)}</td><td class="gold">${this.num(v)}</td></tr>`; })}
    </table>`;
  }

  private info(rows: string) {
    return html`<table><colgroup><col class="c-label"><col class="c-val"><col class="c-gap"><col></colgroup>
      ${rows.split("|").map((r) => {
        const [a, av, ac, b, bv, bc] = r.split(" ");
        return html`<tr><th scope="row">${a}</th><td class=${ac}>${this.num(av)}</td><th scope="row">${b === "PE" ? html`<b>PE(</b>动<b>)</b>` : b}</th><td class=${bc}>${this.num(bv)}</td></tr>`;
      })}
    </table>`;
  }

  render() {
    const flows: [string, number, string, string, string][] = [
      ["净流入额", 27, "875.1万", "28%", "red"], ["大宗流入", 11, "337.7万", "11%", "red"],
      ["5日净流入额", 36, "-1114万", "-10%", "green"], ["5日大宗流入", 2, "-87.9万", "-1%", "green"],
    ];
    const ticks = `14:54 14.90 0.4 B 1|14:54 14.90 0.9 B 3|14:55 14.90 0.3 B 2|14:55 14.90 0.1 B 1|14:55 14.90 0.4 B 3|14:55 14.89 1.5 S 2|14:55 14.89 1.5 S 2|14:55 14.89 0.6 B 1|14:55 14.87 3.0 S 4|14:56 14.87 0.1 S 1|14:56 14.88 0.1 B 1|14:56 14.87 0.6 S 2|14:56 14.87 0.9 S 3|14:56 14.87 0.3 B 2|14:56 14.86 5.2 S 6|14:56 14.86 2.2 S 4|14:56 14.86 0.3 S 1|14:56 14.87 2.2 B 1|14:56 14.86 1.3 S 1|14:56 14.86 0.1 B 1|15:00 14.85 78.0 _ 46`;
    return html`
      <header><h1>宝鼎科技 <small>002552</small></h1><div class="last"><span>14.85</span><span>▲0.99</span><span>7.14%</span></div></header>
      <div class="book">${this.book("卖五￥ 14.89 90.7万|卖四 14.88 5.7万|卖三 14.87 10.3万|卖二 14.86 102.4万|卖一 14.85 36.7万")}
        <div class="split"></div>
        ${this.book("买一 14.84 0.6万|买二 14.83 8.3万|买三 14.82 7.3万|买四 14.80 16.3万|买五 14.77 13.9万")}</div>
      <div class="info">${this.info("今开 14.34 red 均价 14.70 red|最高 15.07 red 量比 1.20 red|最低 14.00 red 市值 45.5亿 w|现量 525 violet 总量 21337 w|外盘 13617 red 内盘 7720 green")}</div>
      <div class="info ratio">${this.info("换手 0.92% w 股本 3.06亿 w|净资 2.21 w 流通 2.31亿 w|收益㈢ 0.030 w PE 443.2 w")}</div>
      <div class="flows"><table><colgroup><col class="c-name"><col class="c-bar"><col class="c-sum"><col></colgroup>
        ${flows.map(([n, w, s, p, c]) => html`<tr><th scope="row">${n}</th><td><span class="bar bg-${c}" style="width:${w}px"></span></td><td class=${c}>${this.num(s)}</td><td class=${c}>${this.num(p)}</td></tr>`)}
      </table></div>
      <table class="ticks"><colgroup><col class="c-time"><col class="c-price"><col class="c-vol"><col class="c-side"><col></colgroup>
        ${ticks.split("|").map((r) => {
          const [t, p, v, s, n] = r.split(" ");
          return html`<tr><th scope="row"><b>${t}</b></th><td class="red"><b>${p}</b></td><td class=${s === "_" ? "violet" : "gold"}><b>${v}</b>万</td><td class="side ${s === "B" ? "red" : "green"}"><b>${s === "_" ? "" : s}</b></td><td class="gray"><b>${n}</b></td></tr>`;
        })}
      </table>`;
  }
}

/* ---------- icon rail ---------- */

@customElement("tool-rail")
class ToolRail extends LitElement {
  static styles = [BASE, css`
    :host { background: #f0f0f0; color: #1c3f94; font-size: 17px; border-left: 1px solid #ccc; overflow: hidden; }
    .group { display: grid; grid-auto-rows: 1fr; }
    .g1 { height: 481px; } .g2 { height: 172px; } .g3 { height: 484px; }
    hr { margin: 5px 3px; border: 0; border-top: 2px solid #a8a8a8; }
    button { display: grid; place-items: center; width: 100%; }
    svg { width: 24px; height: 22px; overflow: visible; }
    .on { background: #f8f8f8; border: 2px solid #909090; border-width: 2px 0 0 2px; }
  `];
  render() {
    const icon = (k: string) => html`<button aria-label=${k}><svg viewBox="0 0 24 22">${SIDE[k]}</svg></button>`;
    const keys = Object.keys(SIDE);
    return html`
      <div class="group g1">${keys.slice(0, 14).map(icon)}</div><hr>
      <div class="group g2">${keys.slice(14, 19).map(icon)}</div><hr>
      <div class="group g3">${keys.slice(19).map(icon)}${"1 5 15 30 60 日 周 月 N 多 季 年".split(" ").map((t) => html`<button class=${classMap({ on: t === "日" })}>${t}</button>`)}</div>`;
  }
}

/* ---------- index ticker ---------- */

@customElement("index-bar")
class IndexBar extends LitElement {
  static styles = [BASE, css`
    .bar { display: flex; align-items: center; height: 35px; padding-left: 2px; background: #f0f0f0; color: #101010; font-size: 24px; line-height: 33px; white-space: nowrap; border-bottom: 2px solid #204050; overflow: hidden; }
    .mark { width: 21px; height: 21px; margin-right: 3px; flex: none; }
    .index { display: flex; align-items: baseline; gap: 20px; margin-right: 22px; }
    .pair { display: flex; align-items: baseline; gap: 6px; }
    b { font-size: 21px; line-height: 1; }
    .down { color: #008c10; }
    .total { display: flex; align-items: baseline; gap: 12px; padding-left: 3px; border-left: 2px solid #b0b0b0; }
  `];
  @property({ attribute: false }) rows = [
    ["上证", "3361.44", "-32.81", "-0.97%", "3538"],
    ["深证", "13328.1", "-70.79", "-0.53%", "4651"],
    ["中小", "9077.82", "-74.28", "-0.81%", "638.9"],
  ];
  render() {
    return html`<footer class="bar">
      <svg class="mark" viewBox="0 0 21 21" aria-hidden="true"><rect x="1" y="1" width="19" height="19" rx="2" fill="#ffd890" stroke="#e09a20" stroke-width="2"></rect><rect x="5" y="6" width="11" height="9" fill="#f5a028" stroke="#fff"></rect></svg>
      ${this.rows.map(([n, v, d, p, t]) => html`<div class="index"><span class="pair">${n}<b class="down">${v}</b></span><b class="down">${d}</b><b class="down">${p}</b><span><b>${t}</b>亿</span></div>`)}
      <div class="total"><span>总成交</span><span><b>8189</b>亿</span></div>
    </footer>`;
  }
}

/* ---------- page ---------- */

@customElement("app-root")
class AppRoot extends LitElement {
  static styles = [BASE, css`
    :host { position: relative; display: grid; grid-template-rows: auto minmax(0, 1fr) auto; height: 100vh; min-height: 1000px; background: #000; font-family: "Liberation Sans", "Noto Sans CJK SC", sans-serif; overflow: hidden; }
    main { display: grid; grid-template-columns: minmax(0, 1fr) 336px 37px; min-height: 0; }
    .work { display: flex; flex-direction: column; min-width: 0; min-height: 0; }
    chart-stack { flex: 1; }
    .side { border-left: 1px solid #b00000; }
    .banner { position: absolute; right: 0; bottom: 0; display: flex; align-items: center; height: 81px; width: 800px; padding: 0 14px 0 18px; background: rgba(130, 175, 222, 0.97); white-space: nowrap; }
    .cn { font-size: 55px; line-height: 81px; font-weight: 900; color: #1a0082; }
    .seal { width: 80px; height: 80px; margin: 0 28px 0 27px; flex: none; }
    .seal text { font-size: 10px; font-weight: 700; fill: #fff; }
    .url { font: 700 65px/81px "Liberation Serif", serif; color: #fff; -webkit-text-stroke: 3px #fff; text-decoration: none; }
  `];
  render() {
    return html`
      <menu-bar></menu-bar>
      <main>
        <div class="work"><period-bar></period-bar><chart-stack></chart-stack><tab-rows></tab-rows></div>
        <quote-panel class="side"></quote-panel>
        <tool-rail></tool-rail>
      </main>
      <index-bar></index-bar>
      <aside class="banner">
        <span class="cn">公式指标网</span>
        <svg class="seal" viewBox="0 0 80 80" aria-hidden="true">
          <g fill="none" stroke-width="9"><path d="M6 38A35 35 0 0 1 31 6M49 6A35 35 0 0 1 74 38" stroke="#d85a48"></path><path d="M74 41A35 35 0 0 1 38 75" stroke="#f0d048"></path></g>
          <path fill-rule="evenodd" d="M33 1H47V8L44 11V16H55V38H25V16H36V11L33 8ZM40 3A3.500 3.500 0 1 0 40.100 3ZM24 41H56V47H50L56 58L52 66L44 68L43 58H37L36 68L28 66L24 58L30 47H24Z" fill="#f0d048"></path>
          <path d="M28 22H36M28 29H38V36M44 22V36M44 26H52V36M29 53H51" stroke="#82afde" stroke-width="2" fill="none"></path>
          <path id="arc" d="M1 41A39 39 0 0 0 34 79" fill="none"></path><text><textPath href="#arc">www.9m8.cn</textPath></text>
        </svg>
        <a class="url" href="#">www.9m8.cn</a>
      </aside>`;
  }
}
